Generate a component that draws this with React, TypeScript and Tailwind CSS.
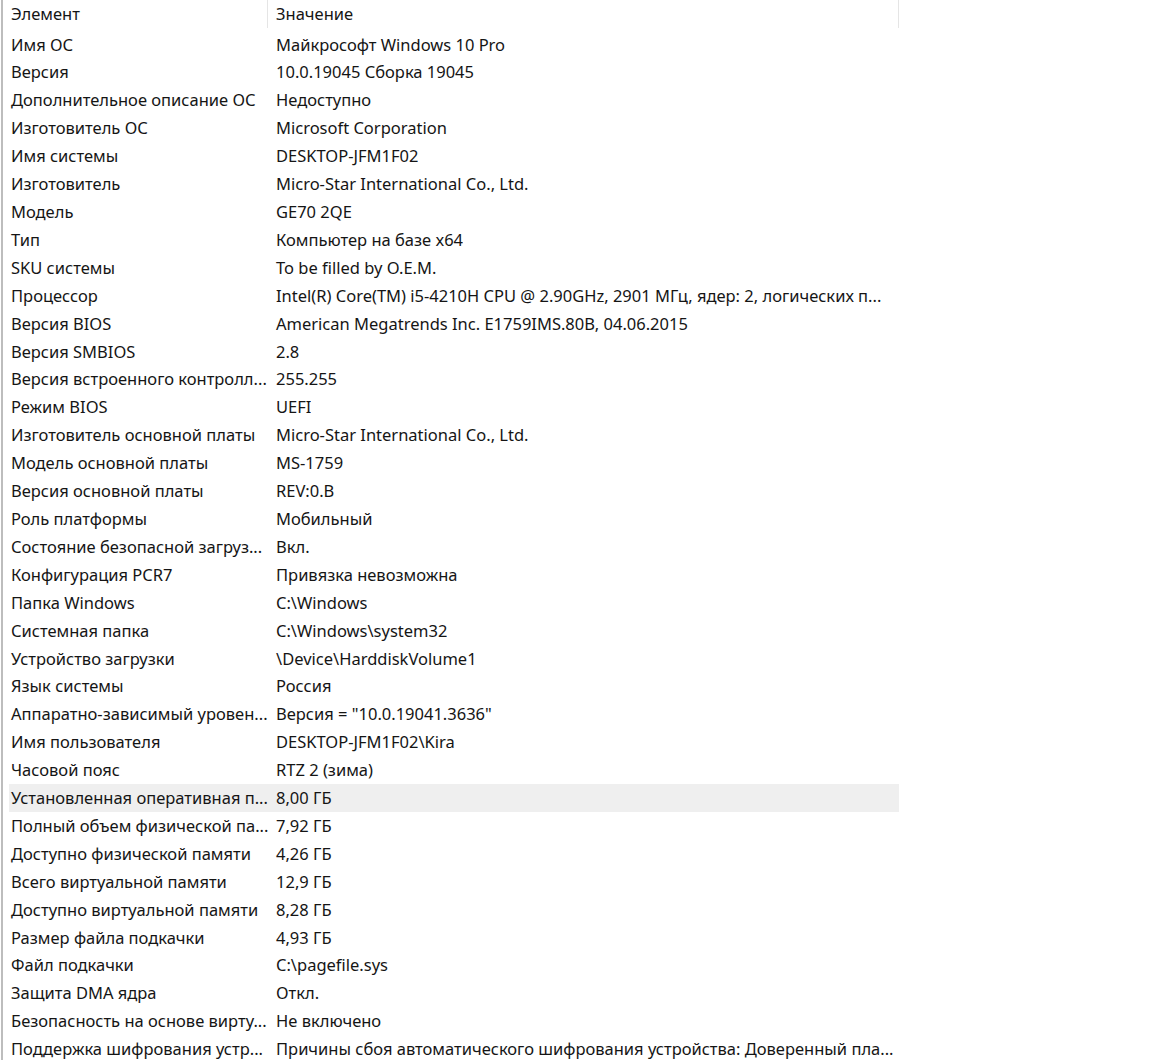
const rows: [string, string][] = [
  ['Имя ОС', 'Майкрософт Windows 10 Pro'],
  ['Версия', '10.0.19045 Сборка 19045'],
  ['Дополнительное описание ОС', 'Недоступно'],
  ['Изготовитель ОС', 'Microsoft Corporation'],
  ['Имя системы', 'DESKTOP-JFM1F02'],
  ['Изготовитель', 'Micro-Star International Co., Ltd.'],
  ['Модель', 'GE70 2QE'],
  ['Тип', 'Компьютер на базе x64'],
  ['SKU системы', 'To be filled by O.E.M.'],
  ['Процессор', 'Intel(R) Core(TM) i5-4210H CPU @ 2.90GHz, 2901 МГц, ядер: 2, логических п...'],
  ['Версия BIOS', 'American Megatrends Inc. E1759IMS.80B, 04.06.2015'],
  ['Версия SMBIOS', '2.8'],
  ['Версия встроенного контролл...', '255.255'],
  ['Режим BIOS', 'UEFI'],
  ['Изготовитель основной платы', 'Micro-Star International Co., Ltd.'],
  ['Модель основной платы', 'MS-1759'],
  ['Версия основной платы', 'REV:0.B'],
  ['Роль платформы', 'Мобильный'],
  ['Состояние безопасной загруз...', 'Вкл.'],
  ['Конфигурация PCR7', 'Привязка невозможна'],
  ['Папка Windows', 'C:\\Windows'],
  ['Системная папка', 'C:\\Windows\\system32'],
  ['Устройство загрузки', '\\Device\\HarddiskVolume1'],
  ['Язык системы', 'Россия'],
  ['Аппаратно-зависимый уровен...', 'Версия = "10.0.19041.3636"'],
  ['Имя пользователя', 'DESKTOP-JFM1F02\\Kira'],
  ['Часовой пояс', 'RTZ 2 (зима)'],
  ['Установленная оперативная п...', '8,00 ГБ'],
  ['Полный объем физической па...', '7,92 ГБ'],
  ['Доступно физической памяти', '4,26 ГБ'],
  ['Всего виртуальной памяти', '12,9 ГБ'],
  ['Доступно виртуальной памяти', '8,28 ГБ'],
  ['Размер файла подкачки', '4,93 ГБ'],
  ['Файл подкачки', 'C:\\pagefile.sys'],
  ['Защита DMA ядра', 'Откл.'],
  ['Безопасность на основе вирту...', 'Не включено'],
  ['Поддержка шифрования устр...', 'Причины сбоя автоматического шифрования устройства: Доверенный пла...'],
];

export default function App() {
  const selected = 27;

  return (
    <div
      className="w-[1150px] h-[1060px] overflow-hidden bg-white flex text-[16.5px] text-[#151515]"
      style={{ fontFamily: '"Noto Sans", "Open Sans", sans-serif' }}
    >
      {/* left edge of the list view */}
      <div className="w-[2px] ml-px bg-[#bdbdbd] shrink-0" />

      <div className="flex-1 flex flex-col">
        {/* Column header */}
        <div className="h-[31px] flex shrink-0">
          <div className="w-[265px] flex items-center pl-[8px] border-r border-[#e5e5e5] h-[28px]">Элемент</div>
          <div className="w-[631px] flex items-center pl-[8px] border-r border-[#e5e5e5] h-[28px]">Значение</div>
        </div>

        {/* Rows */}
        <div className="flex flex-col">
          {rows.map(([name, value], i) => (
            <div
              key={i}
              className={`h-[27.92px] flex items-center w-[890px] ml-[6px] whitespace-nowrap ${
                i === selected ? 'bg-[#efefef]' : ''
              }`}
            >
              <div className="w-[262px] pl-[2px] shrink-0 overflow-hidden">{name}</div>
              <div className="pl-[5px] overflow-hidden">{value}</div>
            </div>
          ))}
        </div>
      </div>
    </div>
  );
}
